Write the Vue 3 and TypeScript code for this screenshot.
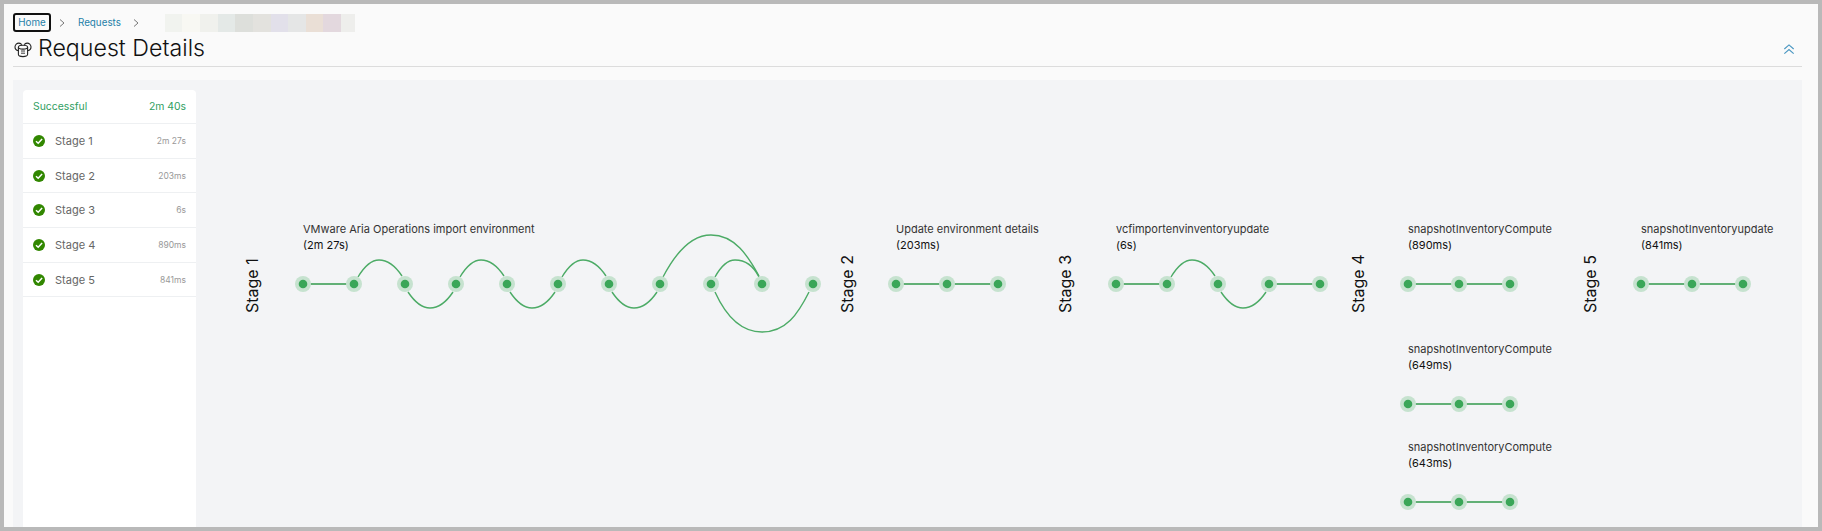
<script setup lang="ts">
interface Graph { title: string; time: string; width: number; gap: number; lines: number[][]; arcs: string[]; nodes: number[] }
interface Stage { name: string; width: number; inset: number; graphs: Graph[] }

const swatches = [
  ['#f1f3ef', 17], ['#f8f8f3', 18], ['#f0f1ed', 18], ['#e4e9e7', 17], ['#dddfdb', 18], ['#e3e2de', 18],
  ['#e2e0ea', 17], ['#e5e6e6', 18], ['#eadfd6', 17], ['#e3d8de', 18], ['#eeeeec', 14]
] as [string, number][]

const stageRows = [
  { name: 'Stage 1', time: '2m 27s' },
  { name: 'Stage 2', time: '203ms' },
  { name: 'Stage 3', time: '6s' },
  { name: 'Stage 4', time: '890ms' },
  { name: 'Stage 5', time: '841ms' }
]

const P = 51
const nx = (i: number) => 8 + i * P
const nodes = (n: number) => Array.from({ length: n }, (_, i) => nx(i))
const up = (i: number) => {
  const a = nx(i) + 4, b = nx(i + 1) - 3
  return `M${a} 9 C${a + 6} -1 ${a + 13} -8 ${a + 21} -8 C${a + 30} -8 ${b - 6} -1 ${b} 8`
}
const down = (i: number) => {
  const a = nx(i) + 3, b = nx(i + 1) - 3
  return `M${a} 24 C${a + 6} 33 ${a + 14} 40 ${a + 22} 40 C${a + 31} 40 ${b - 6} 33 ${b} 24`
}

const stages: Stage[] = [
  {
    name: 'Stage 1', width: 595, inset: 51, graphs: [{
      title: 'VMware Aria Operations import environment', time: '(2m 27s)', width: 526, gap: 0,
      nodes: nodes(11), lines: [[0, 1]],
      arcs: [
        up(1), down(2), up(3), down(4), up(5), down(6),
        `M${nx(7) + 3} 9 C${nx(7) + 15} -14 ${nx(7) + 30} -33 ${nx(8)} -33 C${nx(8) + 24} -33 ${nx(9) - 14} -12 ${nx(9) - 3} 8`,
        `M${nx(8) + 4} 9 C${nx(8) + 9} 0 ${nx(8) + 16} -8 ${nx(8) + 24} -8 C${nx(8) + 34} -8 ${nx(9) - 9} -3 ${nx(9) - 3} 9`,
        `M${nx(8) + 4} 24 C${nx(8) + 14} 46 ${nx(8) + 28} 64 ${nx(9)} 64 C${nx(9) + 24} 64 ${nx(10) - 15} 46 ${nx(10) - 4} 24`
      ]
    }]
  },
  {
    name: 'Stage 2', width: 218, inset: 49, graphs: [{
      title: 'Update environment details', time: '(203ms)', width: 118, gap: 0,
      nodes: nodes(3), lines: [[0, 1], [1, 2]], arcs: []
    }]
  },
  {
    name: 'Stage 3', width: 293, inset: 51, graphs: [{
      title: 'vcfimportenvinventoryupdate', time: '(6s)', width: 220, gap: 0,
      nodes: nodes(5), lines: [[0, 1], [3, 4]], arcs: [up(1), down(2)]
    }]
  },
  {
    name: 'Stage 4', width: 232, inset: 50, graphs: [
      { title: 'snapshotInventoryCompute', time: '(890ms)', width: 118, gap: 0, nodes: nodes(3), lines: [[0, 1], [1, 2]], arcs: [] },
      { title: 'snapshotInventoryCompute', time: '(649ms)', width: 118, gap: 41, nodes: nodes(3), lines: [[0, 1], [1, 2]], arcs: [] },
      { title: 'snapshotInventoryCompute', time: '(643ms)', width: 118, gap: 19, nodes: nodes(3), lines: [[0, 1], [1, 2]], arcs: [] }
    ]
  },
  {
    name: 'Stage 5', width: 220, inset: 51, graphs: [{
      title: 'snapshotInventoryupdate', time: '(841ms)', width: 118, gap: 0,
      nodes: nodes(3), lines: [[0, 1], [1, 2]], arcs: []
    }]
  }
]
</script>

<template>
  <div class="frame">
    <div class="page">
      <nav class="crumbs">
        <a class="crumb home">Home</a>
        <svg class="chev first" viewBox="0 0 8 10"><path d="M2 1.5 L6 5 L2 8.5" /></svg>
        <a class="crumb">Requests</a>
        <svg class="chev second" viewBox="0 0 8 10"><path d="M2 1.5 L6 5 L2 8.5" /></svg>
        <div class="blur">
          <i v-for="(s, i) in swatches" :key="i" :style="{ background: s[0], width: s[1] + 'px' }"></i>
        </div>
      </nav>

      <header class="head">
        <svg class="page-icon" viewBox="0 0 18 18" fill="none" stroke="#222" stroke-width="1.1">
          <path d="M4.4 10.6 C2.2 10.4 0.9 8.8 1 6.8 C1.1 4.6 2.9 3 5 3.1 C6.2 3.2 7.2 3.8 7.8 4.8" />
          <path d="M13.6 10.6 C15.8 10.4 17.1 8.8 17 6.8 C16.9 4.6 15.1 3 13 3.1 C11.8 3.2 10.8 3.8 10.2 4.8" />
          <ellipse cx="9" cy="7.2" rx="4.6" ry="1.9" fill="#fafafa" />
          <path d="M4.4 7.2 V14.6 C4.4 15.8 6.4 16.6 9 16.6 C11.6 16.6 13.6 15.8 13.6 14.6 V7.2" />
          <path d="M7 11 H11 M7 13.2 H11" stroke-width="0.9" />
        </svg>
        <h1 class="title">Request Details</h1>
        <svg class="collapse" viewBox="0 0 12 12"><path d="M2 6 L6 2.5 L10 6 M2 10 L6 6.5 L10 10" /></svg>
      </header>

      <section class="panel">
        <aside class="side">
          <div class="side-head"><span>Successful</span><span>2m 40s</span></div>
          <div v-for="r in stageRows" :key="r.name" class="side-row">
            <svg class="ok" viewBox="0 0 12 12">
              <circle cx="6" cy="6" r="6" fill="#318700" />
              <path d="M3 6.2 L5.2 8.3 L9.1 4" fill="none" stroke="#fff" stroke-width="1.5" />
            </svg>
            <span class="row-name">{{ r.name }}</span>
            <span class="row-time">{{ r.time }}</span>
          </div>
        </aside>

        <div class="stages">
          <div v-for="s in stages" :key="s.name" class="stage" :style="{ width: s.width + 'px' }">
            <div class="stage-label-col"><span class="stage-label">{{ s.name }}</span></div>
            <div class="graphs" :style="{ marginLeft: s.inset - 10 + 'px' }">
              <div v-for="(g, gi) in s.graphs" :key="gi" class="graph" :style="{ marginTop: g.gap + 'px' }">
                <div class="g-title">{{ g.title }}</div>
                <div class="g-time">{{ g.time }}</div>
                <svg class="g-svg" :width="g.width" height="32" :viewBox="`0 0 ${g.width} 32`">
                  <line v-for="(l, li) in g.lines" :key="li" class="edge" :x1="g.nodes[l[0]]" y1="16" :x2="g.nodes[l[1]]" y2="16" />
                  <path v-for="(a, ai) in g.arcs" :key="ai" class="arc" :d="a" />
                  <g v-for="(x, ni) in g.nodes" :key="ni">
                    <circle :cx="x" cy="16" r="8" fill="#c6e2cf" />
                    <circle :cx="x" cy="16" r="4.3" fill="#3aa658" />
                  </g>
                </svg>
              </div>
            </div>
          </div>
        </div>
      </section>
    </div>
  </div>
</template>

<style>
html, body { margin: 0; padding: 0; overflow: hidden; }
</style>

<style scoped>
.frame {
  width: 1822px;
  height: 531px;
  box-sizing: border-box;
  padding: 4px;
  background: #b9b9b9;
  font-family: Inter, "Open Sans", sans-serif;
}
.page {
  height: 523px;
  box-sizing: border-box;
  background: #fafafa;
  padding: 9px 16px 0 9px;
  overflow: hidden;
}
.crumbs {
  display: flex;
  align-items: center;
  height: 19px;
  font-size: 9.8px;
}
.crumb { color: #1f7fa8; }
.home {
  box-sizing: border-box;
  width: 38px;
  height: 19px;
  border: 2px solid #111;
  border-radius: 3px;
  text-align: center;
  line-height: 15px;
}
.chev { width: 8px; height: 10px; flex: none; }
.chev path { fill: none; stroke: #777; stroke-width: 1; }
.chev.first { margin: 0 12px 0 7px; }
.chev.second { margin: 0 0 0 11px; }
.blur { display: flex; height: 18px; margin-left: 25px; }
.blur i { display: block; height: 18px; }

.head {
  display: flex;
  align-items: center;
  height: 34px;
  border-bottom: 1px solid #dcdcdc;
}
.page-icon { width: 18px; height: 18px; margin-left: 1px; margin-right: 6px; }
.title {
  margin: 0 0 2px;
  flex: 1;
  font-size: 23.2px;
  font-weight: 300;
  color: #111;
  line-height: 30px;
}
.collapse { width: 14px; height: 14px; margin-right: 6px; }
.collapse path { fill: none; stroke: #4a97c2; stroke-width: 1; }

.panel {
  display: flex;
  margin-top: 13px;
  height: 447px;
  background: #f3f4f6;
  padding: 10px 0 0 10px;
  box-sizing: border-box;
}
.side {
  width: 173px;
  flex: none;
  background: #fff;
  border-radius: 4px 4px 0 0;
  height: 437px;
}
.side-head {
  display: flex;
  justify-content: space-between;
  align-items: center;
  height: 33px;
  padding: 0 10px;
  font-size: 10.4px;
  color: #2f9e5f;
  border-bottom: 1px solid #eef0f2;
}
.side-row {
  display: flex;
  align-items: center;
  height: 33.7px;
  padding: 0 10px;
  border-bottom: 1px solid #eef0f2;
}
.ok { width: 12px; height: 12px; flex: none; margin-right: 10px; }
.row-name { flex: 1; font-size: 11px; color: #666; }
.row-time { font-size: 8.5px; color: #999; }

.stages {
  display: flex;
  padding: 131px 0 0 46px;
}
.stage { display: flex; flex: none; }
.stage-label-col { width: 20px; flex: none; padding-top: 34px; }
.stage-label {
  display: block;
  writing-mode: vertical-rl;
  transform: rotate(180deg);
  font-size: 16px;
  line-height: 20px;
  height: 58px;
  text-align: left;
  color: #111;
  white-space: nowrap;
}
.graphs { display: flex; flex-direction: column; }
.graph { display: flex; flex-direction: column; }
.g-title, .g-time { font-size: 11px; line-height: 16px; white-space: nowrap; }
.g-title { color: #333; }
.g-time { color: #111; margin-bottom: 15px; }
.g-svg { display: block; margin-left: -8px; overflow: visible; }
.edge { stroke: #62b076; stroke-width: 2; }
.arc { fill: none; stroke: #4cab66; stroke-width: 1.4; }
</style>
